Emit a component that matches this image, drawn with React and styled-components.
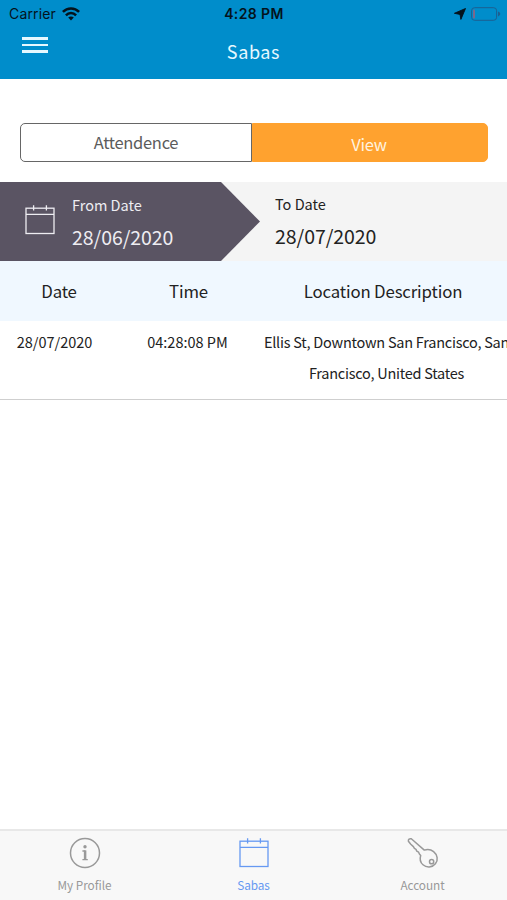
import React from 'react'
import styled, { createGlobalStyle } from 'styled-components'

const columns = ['Date', 'Time', 'Location Description']

const records = [
  {
    date: '28/07/2020',
    time: '04:28:08 PM',
    location: ['Ellis St, Downtown San Francisco, San', 'Francisco, United States'],
  },
]

function CalendarIcon() {
  return (
    <svg width='30' height='30' viewBox='0 0 30 30' fill='none' stroke='currentColor' strokeWidth='1.3'>
      <rect x='1' y='3.2' width='28' height='25.3' />
      <path d='M1 9.3H29M8.6 0.3V5.6M21.4 0.3V5.6' />
    </svg>
  )
}

function InfoIcon() {
  return (
    <svg width='32' height='32' viewBox='0 0 32 32' fill='none' stroke='currentColor' strokeWidth='1.5'>
      <circle cx='16' cy='16' r='14.5' />
      <circle cx='16' cy='9.8' r='1.7' fill='currentColor' stroke='none' />
      <path d='M13.4 14H16.4M13.4 22.7H18.8' strokeWidth='1.3' />
      <path d='M16.1 13.4V22.5' strokeWidth='2.5' />
    </svg>
  )
}

function KeyIcon() {
  return (
    <svg width='32' height='32' viewBox='0 0 32 32' fill='none' stroke='currentColor' strokeWidth='1.5' strokeLinejoin='round'>
      <path d='M1.4 4.2C1 2.6 2.6 1.2 4.3 1.8L17.3 13.1C20 12.3 23.8 12.4 26.6 14.6C30.6 17.8 31.4 23.2 28.4 26.8C25.2 30.8 19.6 31 16 27.8C13.4 25.4 12.6 21.8 13.7 18.4L12.4 17L11.6 15.2L9.8 14.2L9 12.4L7.4 11.4L6.4 9.6L3.8 7.2Z' />
      <circle cx='24.6' cy='24.7' r='2.1' />
    </svg>
  )
}

function App() {
  return (
    <Screen>
      <GlobalStyle />
      <Header>
        <StatusBar>
          <Carrier>
            Carrier
            <svg width='18' height='14' viewBox='0 0 18 14' fill='none' stroke='#04131c' strokeWidth='2.5'>
              <path d='M0.9 4.9C5.4 0.2 12.6 0.2 17.1 4.9' />
              <path d='M3.9 8.3C6.8 5.3 11.2 5.3 14.1 8.3' />
              <path d='M6.2 10.5C7.8 9 10.2 9 11.8 10.5L9 13.5Z' fill='#04131c' stroke='none' />
            </svg>
          </Carrier>
          <Clock>4:28 PM</Clock>
          <Power>
            <svg width='12' height='12' viewBox='0 0 12 12'>
              <path d='M11.5 0.5L6.9 11.4L6 6.4L0.4 5.3Z' fill='#04131c' stroke='#04131c' strokeWidth='0.9' strokeLinejoin='round' />
            </svg>
            <svg width='30' height='14' viewBox='0 0 30 14' fill='none'>
              <rect x='0.6' y='0.7' width='25' height='12.6' rx='3' stroke='#1c5f91' />
              <rect x='2' y='2.6' width='2' height='8.8' rx='1' fill='#7c688c' />
              <path d='M27 4.6C30 5.6 30 8.4 27 9.4Z' fill='#1c5f91' />
            </svg>
          </Power>
        </StatusBar>
        <TitleBar>
          <Menu>
            <span />
            <span />
            <span />
          </Menu>
          <Title>Sabas</Title>
        </TitleBar>
      </Header>

      <Segments>
        <Segment>Attendence</Segment>
        <Segment $active>View</Segment>
      </Segments>

      <Range>
        <FromDate>
          <CalendarIcon />
          <DateBlock>
            <DateLabel>From Date</DateLabel>
            <DateValue>28/06/2020</DateValue>
          </DateBlock>
        </FromDate>
        <ToDate>
          <DateLabel>To Date</DateLabel>
          <DateValue>28/07/2020</DateValue>
        </ToDate>
      </Range>

      <TableHead>
        {columns.map((name) => (
          <HeadCell key={name}>{name}</HeadCell>
        ))}
      </TableHead>
      {records.map((record) => (
        <TableRow key={record.time}>
          <Cell>{record.date}</Cell>
          <Cell>{record.time}</Cell>
          <Cell $tight>
            {record.location.map((line) => (
              <div key={line}>{line}</div>
            ))}
          </Cell>
        </TableRow>
      ))}

      <TabBar>
        <Tab>
          <TabIcon><InfoIcon /></TabIcon>
          My Profile
        </Tab>
        <Tab $active>
          <TabIcon><CalendarIcon /></TabIcon>
          Sabas
        </Tab>
        <Tab>
          <TabIcon><KeyIcon /></TabIcon>
          Account
        </Tab>
      </TabBar>
    </Screen>
  )
}

export default App

const GlobalStyle = createGlobalStyle`
* {
    box-sizing:border-box;
}
body {
    margin:0;
    background-color:#fff;
}
svg {
    display:block;
    flex:none;
}
`

const Screen = styled.div`
display:flex;
flex-direction:column;
width:507px;
height:900px;
overflow:hidden;
background-color:#fff;
color:#222;
font-family:'Noto Sans CJK SC', 'Open Sans', sans-serif;
white-space:nowrap;
`

const Header = styled.div`
height:79px;
flex:none;
background-color:#008dcb;
`

const StatusBar = styled.div`
display:grid;
grid-template-columns:1fr auto 1fr;
align-items:center;
height:28px;
padding:0 6px 0 9px;
font-family:Inter, sans-serif;
font-size:14px;
line-height:28px;
color:#04131c;
`

const Carrier = styled.div`
display:flex;
align-items:center;
gap:6px;
letter-spacing:0.15px;
`

const Clock = styled.div`
font-weight:600;
letter-spacing:0.4px;
margin-right:2px;
`

const Power = styled.div`
display:flex;
align-items:center;
justify-content:flex-end;
gap:5px;
`

const TitleBar = styled.div`
display:grid;
grid-template-columns:1fr auto 1fr;
height:46px;
padding:0 22px;
`

const Menu = styled.div`
display:flex;
flex-direction:column;
gap:4px;
width:26px;
padding-top:9px;
span {
    height:2.5px;
    background-color:#e6f8ff;
}
`

const Title = styled.div`
font-size:18px;
line-height:46px;
letter-spacing:0.6px;
color:#e6f8ff;
`

const Segments = styled.div`
display:flex;
flex:none;
height:39px;
margin:44px 19px 20px 20px;
`

const Segment = styled.div`
width:${(p) => (p.$active ? '236px' : '232px')};
padding:${(p) => (p.$active ? '3px 2px 0 0' : '1px 0 0')};
border:1px solid ${(p) => (p.$active ? '#ffa22f' : '#666')};
border-radius:${(p) => (p.$active ? '0 5px 5px 0' : '5px 0 0 5px')};
background-color:${(p) => (p.$active ? '#ffa22f' : '#fff')};
color:${(p) => (p.$active ? '#fff3df' : '#5c5c5c')};
font-size:16.5px;
line-height:35px;
letter-spacing:-0.3px;
text-align:center;
`

const Range = styled.div`
display:flex;
flex:none;
height:79px;
background-color:#f4f4f4;
`

const FromDate = styled.div`
display:flex;
gap:17px;
width:260px;
padding:23px 0 0 25px;
background-color:#5a5463;
clip-path:polygon(0 0, 221px 0, 100% 50%, 221px 100%, 0 100%);
color:#eeedf2;
`

const DateBlock = styled.div`
margin-top:-12px;
`

const ToDate = styled.div`
padding:10px 0 0 15px;
`

const DateLabel = styled.div`
font-size:14.5px;
line-height:24px;
`

const DateValue = styled.div`
font-size:19.5px;
line-height:40px;
letter-spacing:-0.05px;
`

const TableHead = styled.div`
display:grid;
grid-template-columns:118px 141px 1fr;
flex:none;
height:60px;
background-color:#f0f8ff;
`

const HeadCell = styled.div`
font-size:16.8px;
line-height:60px;
letter-spacing:-0.15px;
text-align:center;
`

const TableRow = styled.div`
display:grid;
grid-template-columns:109px 157px 241px;
flex:none;
height:79px;
border-bottom:1px solid #cfcfcf;
padding-top:5px;
`

const Cell = styled.div`
display:flex;
flex-direction:column;
align-items:center;
font-size:14.5px;
line-height:31px;
letter-spacing:${(p) => (p.$tight ? '-0.25px' : '0')};
`

const TabBar = styled.div`
display:grid;
grid-template-columns:repeat(3, 1fr);
height:71px;
margin-top:auto;
border-top:2px solid #e8e8e8;
background-color:#f8f8f8;
`

const Tab = styled.div`
display:flex;
flex-direction:column;
align-items:center;
font-size:11.8px;
line-height:20px;
letter-spacing:-0.05px;
color:${(p) => (p.$active ? '#6699f2' : '#999')};
`

const TabIcon = styled.div`
display:flex;
align-items:center;
height:32px;
margin:6px 0 6px;
`
